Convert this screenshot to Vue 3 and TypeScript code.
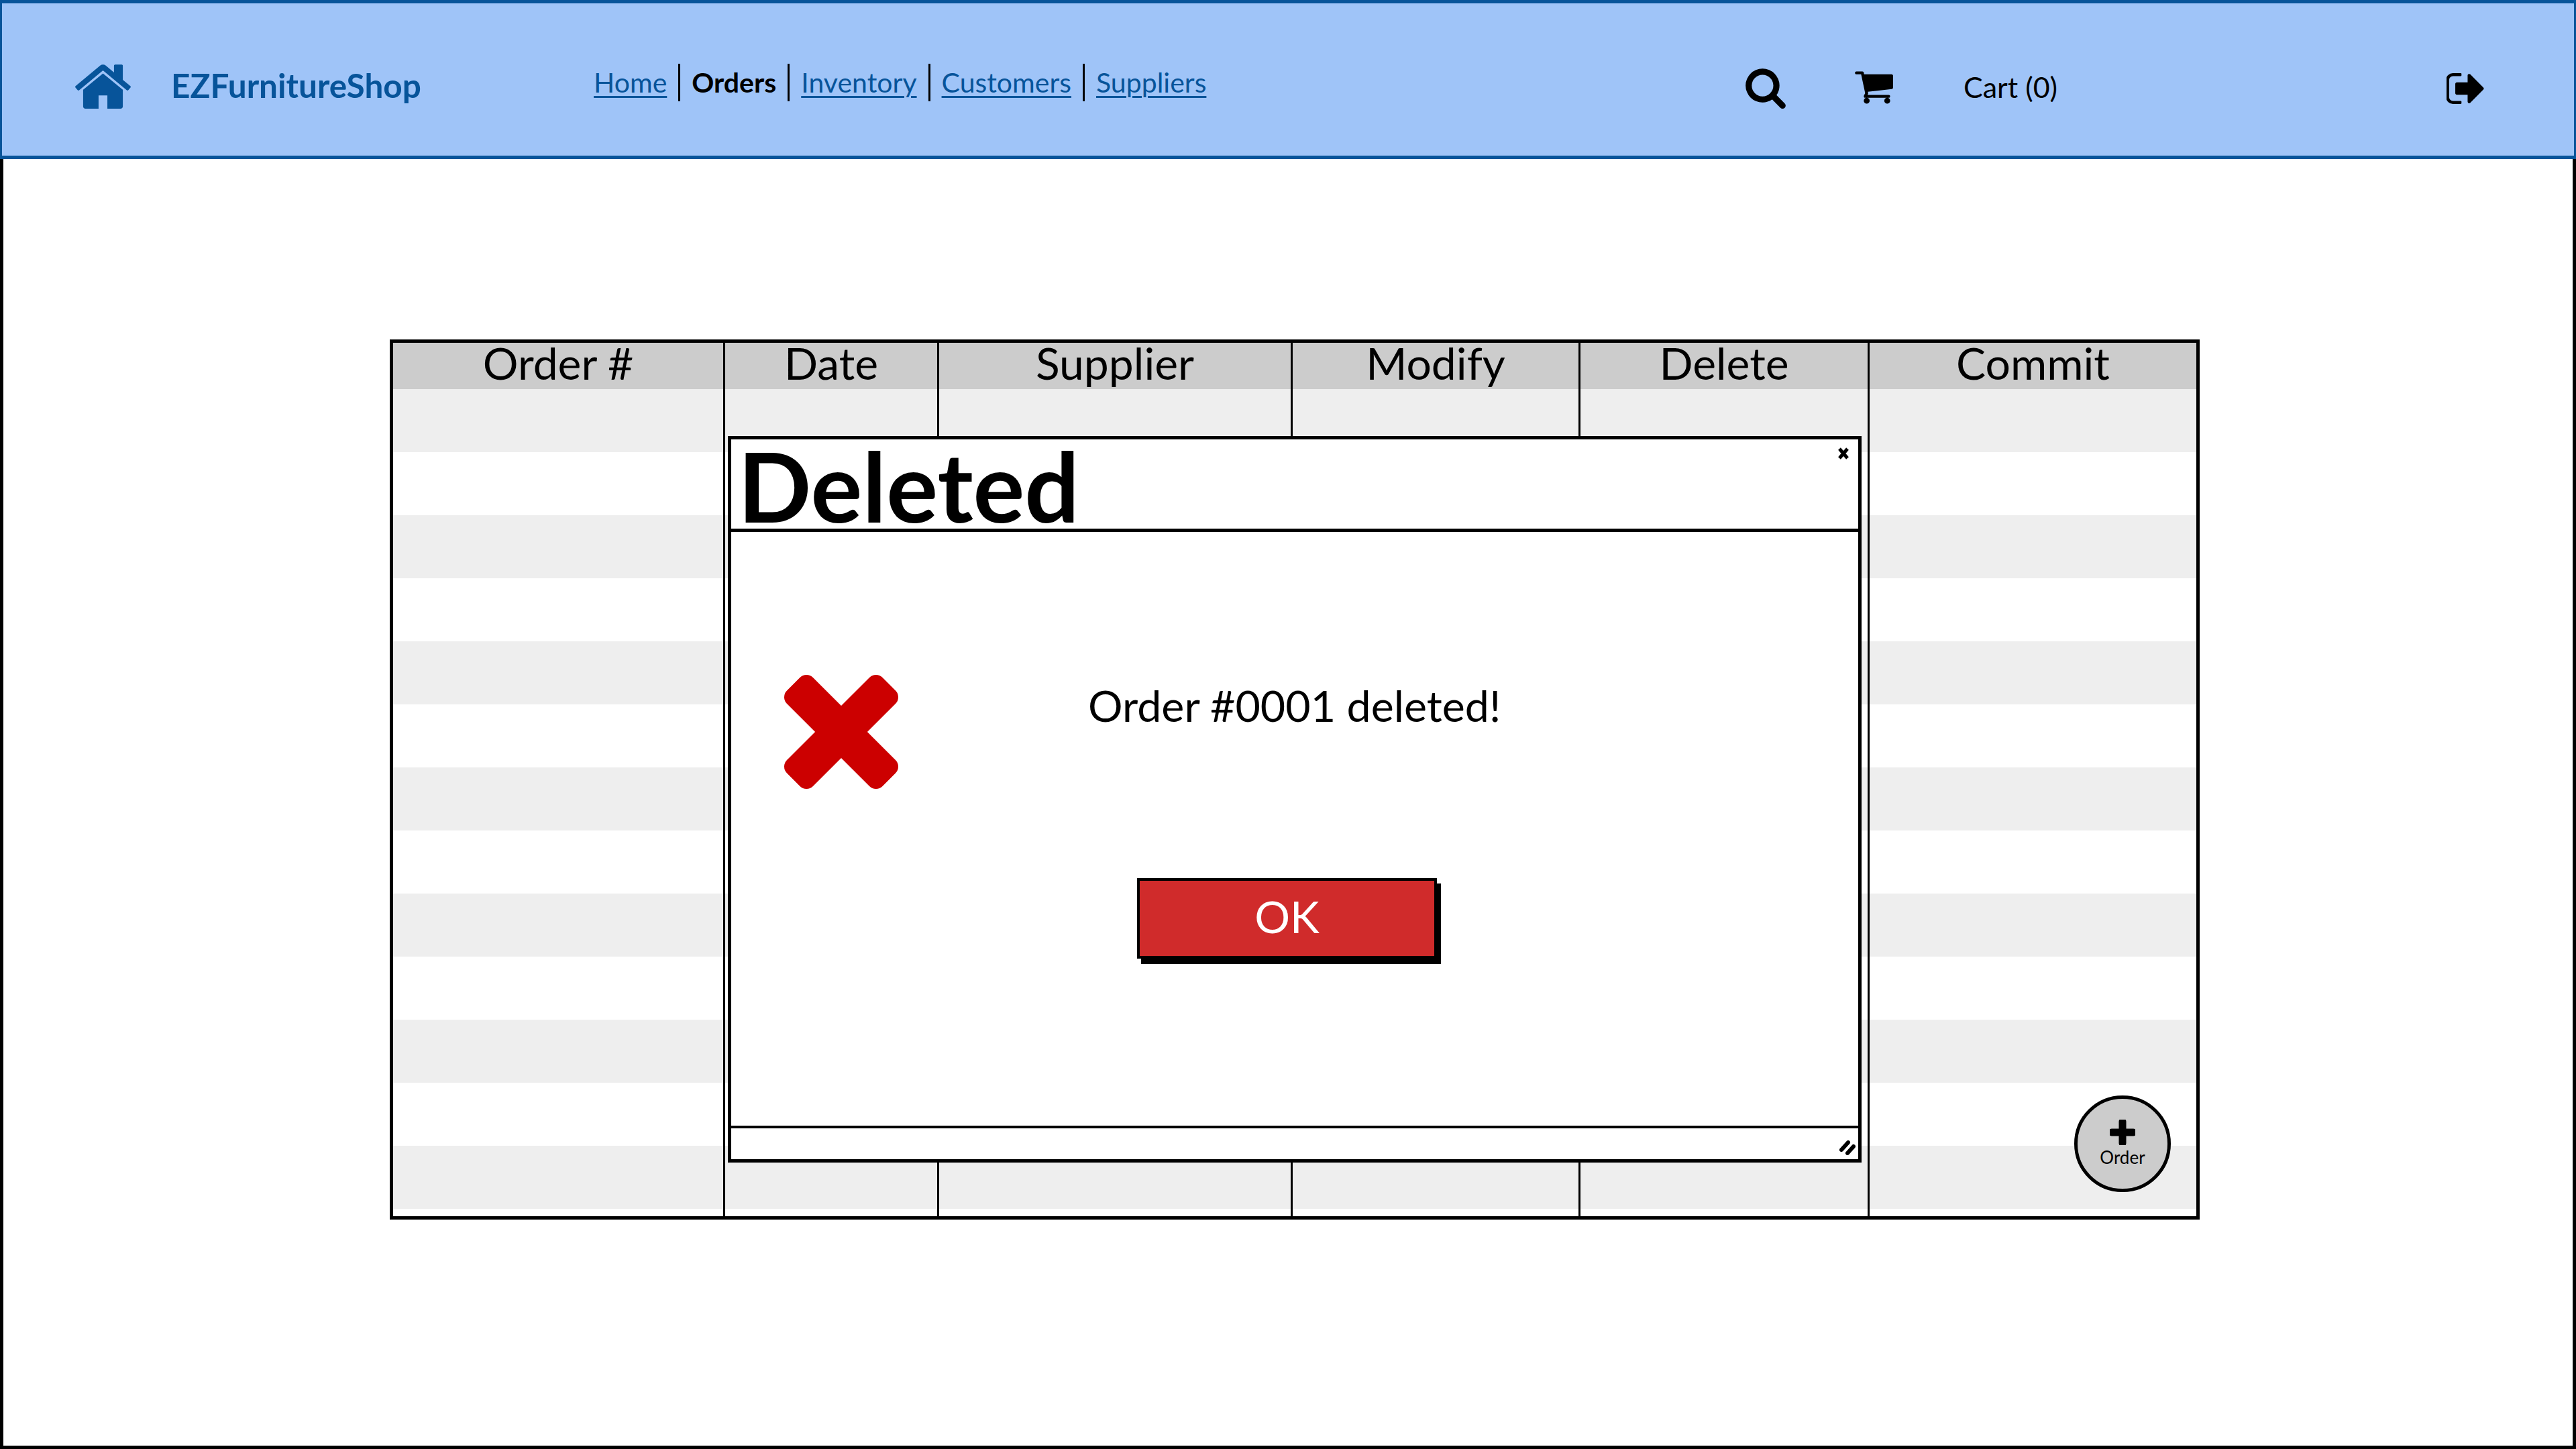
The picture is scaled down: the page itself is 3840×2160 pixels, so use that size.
<script setup lang="ts">
interface Column { title: string; width: number }
const columns: Column[] = [
  { title: 'Order #', width: 492 },
  { title: 'Date', width: 319 },
  { title: 'Supplier', width: 527 },
  { title: 'Modify', width: 429 },
  { title: 'Delete', width: 431 },
  { title: 'Commit', width: 490 },
]
const rows = Array.from({ length: 13 }, (_, i) => i)
const links = [
  { label: 'Home', active: false },
  { label: 'Orders', active: true },
  { label: 'Inventory', active: false },
  { label: 'Customers', active: false },
  { label: 'Suppliers', active: false },
]
</script>

<template>
  <div class="page">
    <header class="nav">
      <svg class="home" viewBox="64 192 1664 1344" aria-hidden="true"><path d="M1472 992v480q0 26-19 45t-45 19h-384v-384h-256v384h-384q-26 0-45-19t-19-45v-480q0-1 .5-3t.5-3l575-474 575 474q1 2 1 6zm223-69l-62 74q-8 9-21 11h-3q-13 0-21-7l-692-577-692 577q-12 8-24 7-13-2-21-11l-62-74q-8-10-7-23.500t11-21.500l719-599q32-26 76-26t76 26l244 204v-195q0-14 9-23t23-9h192q14 0 23 9t9 23v408l219 182q10 8 11 21.500t-7 23.500z" /></svg>
      <div class="brand">EZFurnitureShop</div>
      <nav class="links">
        <template v-for="(link, i) in links" :key="link.label">
          <span v-if="i > 0" class="sep"></span>
          <span :class="link.active ? 'active' : 'link'">{{ link.label }}</span>
        </template>
      </nav>
      <svg class="search" viewBox="64 64 1664 1728" aria-hidden="true"><path d="M1216 832q0-185-131.500-316.500t-316.500-131.500-316.500 131.500-131.500 316.500 131.500 316.500 316.500 131.500 316.500-131.500 131.500-316.500zm512 832q0 52-38 90t-90 38q-54 0-90-38l-343-342q-179 124-399 124-143 0-273.500-55.500t-225-150-150-225-55.500-273.500 55.500-273.500 150-225 225-150 273.500-55.500 273.500 55.500 225 150 150 225 55.500 273.500q0 220-124 399l343 343q37 37 37 90z" /></svg>
      <svg class="cart" viewBox="0 256 1728 1408" aria-hidden="true"><path d="M704 1536q0 52-38 90t-90 38-90-38-38-90 38-90 90-38 90 38 38 90zm896 0q0 52-38 90t-90 38-90-38-38-90 38-90 90-38 90 38 38 90zm128-1088v512q0 24-16.500 42.500t-40.500 21.500l-1044 122q13 60 13 70 0 16-24 64h920q26 0 45 19t19 45-19 45-45 19h-1024q-26 0-45-19t-19-45q0-11 8-31.500t16-36 21.500-40 15.500-29.500l-177-823h-204q-26 0-45-19t-19-45 19-45 45-19h256q16 0 28.500 6.500t19.500 15.500 13 24.500 8 26 5.500 29.500 4.500 26h1201q26 0 45 19t19 45z" /></svg>
      <div class="cart-label">Cart (0)</div>
      <svg class="logout" viewBox="96 256 1536 1280" aria-hidden="true"><path d="M704 1440q0 4 1 20t.5 26.500-3 23.500-10 19.500-20.500 6.500h-320q-119 0-203.500-84.500t-84.500-203.500v-704q0-119 84.500-203.500t203.500-84.500h320q13 0 22.500 9.500t9.500 22.500q0 4 1 20t.5 26.500-3 23.500-10 19.500-20.500 6.500h-320q-66 0-113 47t-47 113v704q0 66 47 113t113 47h312l11.500 1 11.500 3 8 5.500 7 9 2 13.500zm928-544q0 26-19 45l-544 544q-19 19-45 19t-45-19-19-45v-288h-448q-26 0-45-19t-19-45v-384q0-26 19-45t45-19h448v-288q0-26 19-45t45-19 45 19l544 544q19 19 19 45z" /></svg>
    </header>

    <main class="content">
      <section class="table">
        <div v-for="col in columns" :key="col.title" class="col" :style="{ width: col.width + 'px' }">
          <div class="head">{{ col.title }}</div>
          <div v-for="r in rows" :key="r" class="cell" :class="{ odd: r % 2 === 0 }"></div>
        </div>

        <div class="dialog">
          <div class="dialog-title">
            <span>Deleted</span>
            <svg class="close" viewBox="0 0 20 18" aria-hidden="true"><path d="M4 2 L16 16 M16 2 L4 16" /></svg>
          </div>
          <div class="dialog-body">
            <div class="message-row">
              <svg class="x-icon" viewBox="302 366 1188 1188" aria-hidden="true"><path d="M1490 1322q0 40-28 68l-136 136q-28 28-68 28t-68-28l-294-294-294 294q-28 28-68 28t-68-28l-136-136q-28-28-28-68t28-68l294-294-294-294q-28-28-28-68t28-68l136-136q28-28 68-28t68 28l294 294 294-294q28-28 68-28t68 28l136 136q28 28 28 68t-28 68l-294 294 294 294q28 28 28 68z" /></svg>
              <p class="message">Order #0001 deleted!</p>
            </div>
            <button class="ok" type="button">OK</button>
          </div>
          <div class="dialog-status">
            <svg class="grip" viewBox="0 0 24 22" aria-hidden="true"><path d="M3 14 L13 3 M12 19 L21 9" /></svg>
          </div>
        </div>

        <button class="fab" type="button">
          <svg class="plus" viewBox="0 0 38 38" aria-hidden="true"><path d="M19 3 V35 M3 19 H35" /></svg>
          <span>Order</span>
        </button>
      </section>
    </main>
  </div>
</template>

<style scoped>
.page {
  width: 3840px;
  height: 2160px;
  display: flex;
  flex-direction: column;
  box-sizing: border-box;
  background: #fff;
  color: #000;
  font-family: Lato, "Noto Sans", sans-serif;
}
.nav {
  flex: none;
  height: 237px;
  box-sizing: border-box;
  display: flex;
  align-items: center;
  padding: 18px 0 0 107px;
  background: #9fc4f8;
  border: solid #07549a;
  border-width: 5px 3px 5px 3px;
}
.home { width: 87px; height: 69px; fill: #07549a; flex: none; }
.brand {
  flex: none;
  width: 688px;
  box-sizing: border-box;
  padding-left: 58px;
  font-size: 49.500px;
  font-weight: 700;
  color: #07549a;
  white-space: nowrap;
  margin-top: -2px;
}
.links {
  flex: none;
  width: 1717px;
  display: flex;
  align-items: center;
  font-size: 41px;
  margin-top: -10px;
}
.link { color: #07549a; text-decoration: underline; text-decoration-thickness: 3px; text-underline-offset: 5px; }
.active { font-weight: 700; color: #000; }
.sep { width: 3px; height: 56px; background: #000; margin: 0 17px; }
.search { width: 60px; height: 62px; flex: none; margin-top: 6px; }
.cart { width: 59px; height: 51px; flex: none; margin: 6px 0 0 101px; }
.cart-label { flex: none; width: 825px; box-sizing: border-box; padding-left: 105px; font-size: 43px; margin-top: 4px; }
.logout { width: 56px; height: 46px; flex: none; margin-top: 8px; }
.content {
  flex: 1;
  box-sizing: border-box;
  padding: 269px 0 0 576px;
  border: solid #000;
  border-width: 0 5px 5px 5px;
}
.table {
  position: relative;
  box-sizing: border-box;
  width: 2698px;
  height: 1312px;
  display: flex;
  border: 5px solid #000;
  background: #fff;
}
.col { flex: none; box-sizing: border-box; border-left: 3px solid #000; }
.col:first-child { border-left: 0; }
.head {
  height: 69px;
  background: #ccc;
  font-size: 66px;
  line-height: 60px;
  text-align: center;
  white-space: nowrap;
}
.cell { height: 94px; }
.cell.odd { background: #eee; }
.dialog {
  position: absolute;
  left: 499px;
  top: 139px;
  width: 1690px;
  height: 1083px;
  box-sizing: border-box;
  display: flex;
  flex-direction: column;
  border: 5px solid #000;
  background: #fff;
}
.dialog-title {
  position: relative;
  flex: none;
  height: 138px;
  box-sizing: border-box;
  border-bottom: 5px solid #000;
  padding-left: 10px;
  font-size: 144px;
  line-height: 138px;
  font-weight: 700;
  white-space: nowrap;
}
.close {
  position: absolute;
  right: 12px;
  top: 12px;
  width: 20px;
  height: 18px;
  fill: none;
  stroke: #000;
  stroke-width: 5;
}
.dialog-body {
  flex: 1;
  display: flex;
  flex-direction: column;
  align-items: flex-start;
  box-sizing: border-box;
  padding: 213px 0 0 79px;
}
.message-row { display: flex; align-items: flex-start; }
.x-icon { width: 170px; height: 170px; fill: #c00; flex: none; }
.message {
  margin: 5px 0 0 283px;
  font-size: 64.500px;
  line-height: 80px;
  white-space: nowrap;
}
.ok {
  margin: 133px 0 0 526px;
  width: 447px;
  height: 120px;
  box-sizing: border-box;
  border: 4px solid #000;
  box-shadow: 6px 8px 0 #000;
  background: #d02b2b;
  color: #fff;
  font-family: inherit;
  font-size: 66px;
  line-height: 104px;
  padding: 0 0 6px;
}
.dialog-status {
  flex: none;
  height: 50px;
  box-sizing: border-box;
  border-top: 4px solid #000;
  position: relative;
}
.grip {
  position: absolute;
  right: 4px;
  bottom: 6px;
  width: 24px;
  height: 22px;
  fill: none;
  stroke: #000;
  stroke-width: 6;
  stroke-linecap: round;
}
.fab {
  position: absolute;
  left: 2506px;
  top: 1122px;
  width: 144px;
  height: 144px;
  box-sizing: border-box;
  border-radius: 50%;
  border: 5px solid #000;
  background: #ccc;
  padding: 31px 0 0;
  display: flex;
  flex-direction: column;
  align-items: center;
  font-family: inherit;
  font-size: 26px;
  line-height: 28px;
  color: #000;
}
.plus { width: 38px; height: 38px; fill: none; stroke: #000; stroke-width: 11; stroke-linecap: round; margin-bottom: 4px; flex: none; }
</style>
